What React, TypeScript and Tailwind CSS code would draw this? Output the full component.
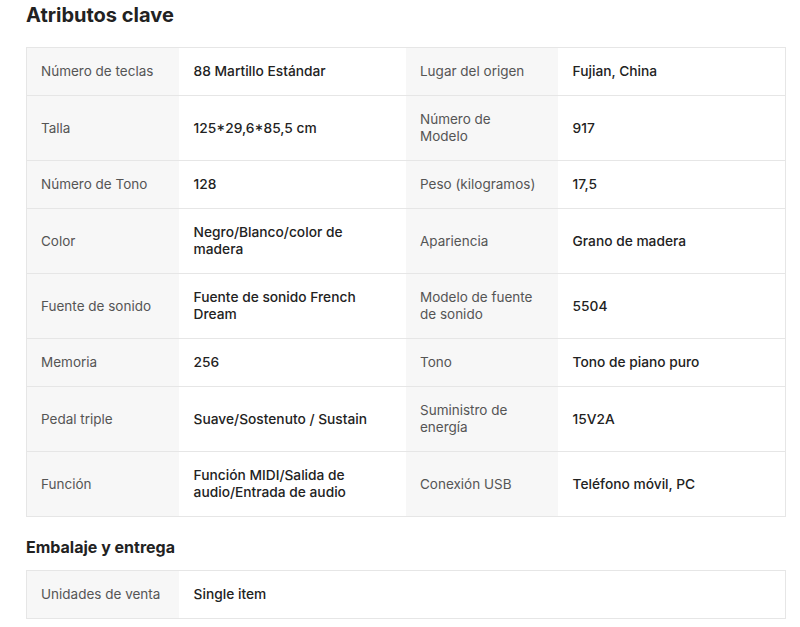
const attributes: [string, string, string, string][] = [
  ['Número de teclas', '88 Martillo Estándar', 'Lugar del origen', 'Fujian, China'],
  ['Talla', '125*29,6*85,5 cm', 'Número de Modelo', '917'],
  ['Número de Tono', '128', 'Peso (kilogramos)', '17,5'],
  ['Color', 'Negro/Blanco/color de madera', 'Apariencia', 'Grano de madera'],
  ['Fuente de sonido', 'Fuente de sonido French Dream', 'Modelo de fuente de sonido', '5504'],
  ['Memoria', '256', 'Tono', 'Tono de piano puro'],
  ['Pedal triple', 'Suave/Sostenuto / Sustain', 'Suministro de energía', '15V2A'],
  ['Función', 'Función MIDI/Salida de audio/Entrada de audio', 'Conexión USB', 'Teléfono móvil, PC'],
]

function Label({ children }: { children: string }) {
  return (
    <div className="flex items-center bg-[#f7f7f7] py-[15px] pr-[17px] pl-[14px] text-[13.5px] text-[#555]">
      {children}
    </div>
  )
}

function Value({ children }: { children: string }) {
  return (
    <div className="flex items-center px-[15px] py-[15px] text-[13.75px] font-medium text-[#222]">
      {children}
    </div>
  )
}

export default function App() {
  return (
    <div
      className="min-h-[627px] bg-white pl-[26px] text-[14px] leading-[17px]"
      style={{ fontFamily: 'Inter, "Noto Sans", sans-serif' }}
    >
      <h2 className="mb-[18px] pt-px text-[20px] leading-7 font-bold text-[#222]">Atributos clave</h2>
      <div className="w-[760px] border border-[#e6e6e6]">
        {attributes.map(([l1, v1, l2, v2], i) => (
          <div
            key={l1}
            className={`grid grid-cols-[20%_30%_20%_30%] ${i < attributes.length - 1 ? 'border-b border-[#e6e6e6]' : ''}`}
          >
            <Label>{l1}</Label>
            <Value>{v1}</Value>
            <Label>{l2}</Label>
            <Value>{v2}</Value>
          </div>
        ))}
      </div>
      <h3 className="mt-[18px] mb-[11px] text-[16px] leading-6 font-bold text-[#222]">Embalaje y entrega</h3>
      <div className="w-[760px] border border-[#e6e6e6]">
        <div className="grid grid-cols-[20%_80%]">
          <Label>Unidades de venta</Label>
          <Value>Single item</Value>
        </div>
      </div>
    </div>
  )
}
